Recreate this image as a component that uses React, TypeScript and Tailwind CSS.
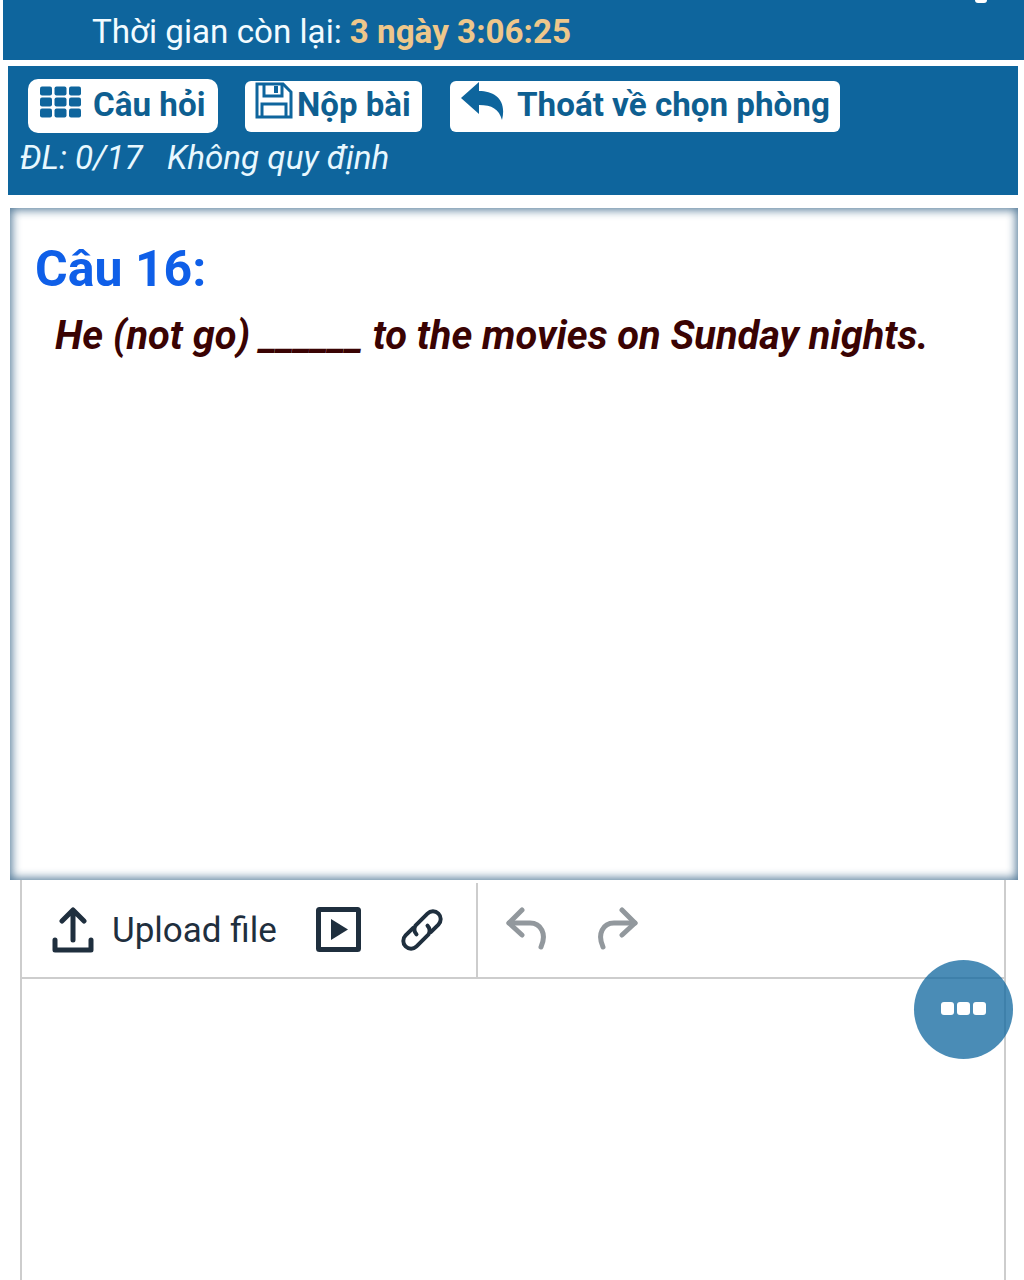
import React from "react";

const roboto = { fontFamily: "Roboto, sans-serif" };

function GridIcon() {
  const cells = [];
  for (let r = 0; r < 3; r++) for (let c = 0; c < 3; c++) cells.push(<rect key={`${r}-${c}`} x={c * 14.5} y={r * 11} width="12" height="9" rx="2" fill="#0e659d" />);
  return <svg width="41" height="32" viewBox="0 0 41 31" className="mb-[7px] shrink-0">{cells}</svg>;
}

function SaveIcon() {
  return (
    <svg width="38" height="38" viewBox="0 0 38 38" fill="none" stroke="#0e659d" strokeWidth="3" className="mb-3 shrink-0">
      <path d="M2 2H28L36 10V35H2Z" />
      <path d="M9 2V14H27V2" />
      <path d="M7 35V22H31V35" />
      <rect x="19" y="4" width="4" height="7" fill="#0e659d" stroke="none" />
    </svg>
  );
}

function ReplyIcon() {
  return (
    <svg width="44" height="38" viewBox="0 0 44 38" className="mb-3 shrink-0">
      <path d="M18 0V9C34 9 46 18 41 38C38 27 31 23 18 23V32L0 16Z" fill="#0e659d" />
    </svg>
  );
}

export default function App() {
  return (
    <div className="relative h-[1280px] w-full overflow-hidden bg-white" style={roboto}>
      <header className="ml-[3px] flex h-[60px] items-end bg-[#0e659d] pb-2 pl-[89px] text-[33.2px] leading-[40px] text-[#f2fbff]">
        <span>Thời gian còn lại: </span>
        <span className="ml-2 font-bold text-[#eec78b]">3 ngày 3:06:25</span>
      </header>

      <section className="ml-[8px] mr-[6px] mt-[6px] h-[129px] bg-[#0e659d] pl-3 pt-[13px]">
        <div className="flex items-start text-[#0e5f91]">
          <button className="ml-2 flex h-[54px] w-[190px] items-center rounded-[10px] bg-white pb-0.5 pl-3 text-[33.2px] font-bold">
            <GridIcon />
            <span className="ml-3">Câu hỏi</span>
          </button>
          <button className="ml-[27px] mt-0.5 flex h-[51px] w-[177px] items-center rounded-md bg-white pl-2.5 text-[33px] font-bold">
            <SaveIcon />
            <span className="ml-1 pb-1">Nộp bài</span>
          </button>
          <button className="ml-7 mt-0.5 flex h-[51px] w-[390px] items-center rounded-md bg-white pl-[11px] text-[33.2px] font-bold">
            <ReplyIcon />
            <span className="ml-[12px] pb-1">Thoát về chọn phòng</span>
          </button>
        </div>
        <p className="mt-[5px] text-[33.2px] italic leading-[40px] text-[#e8f8ff]">ĐL: 0/17 &nbsp; Không quy định</p>
      </section>

      <main className="ml-[10px] mr-[6px] mt-[13px] h-[672px] bg-white pl-[25px] pt-[33px] shadow-[inset_0_0_10px_2px_rgba(30,80,120,0.75)]">
        <h2 className="text-[50px] font-bold leading-[56px] text-[#0f5fe8]">Câu 16:</h2>
        <p className="ml-5 mt-4 text-[39.8px] font-bold italic leading-[46px] text-[#3a0303]">
          He (not go) ______ to the movies on Sunday nights.
        </p>
      </main>

      <section className="ml-[20px] mr-[18px] h-[400px] border-x-2 border-[#cdcdcd]">
        <div className="flex h-[99px] border-b-2 border-[#cdcdcd]">
          <div className="mt-[3px] flex w-[456px] items-center border-r-2 border-[#cdcdcd] pl-[30px] text-[#1f2f3e]">
            <svg width="42" height="46" viewBox="0 0 42 46" fill="none" stroke="#1f2f3e" strokeWidth="5" strokeLinecap="round" strokeLinejoin="round" className="shrink-0">
              <path d="M21 33V4M10 14L21 3L32 14" />
              <path d="M3 33V43H39V33" />
            </svg>
            <span className="ml-[18px] text-[35px] leading-none">Upload file</span>
            <svg width="46" height="46" viewBox="0 0 46 46" className="ml-[39px] shrink-0">
              <rect x="2.5" y="2.5" width="40" height="40" rx="1" fill="none" stroke="#1f2f3e" strokeWidth="5" />
              <path d="M15 12L32 22.5L15 33Z" fill="#1f2f3e" />
            </svg>
            <svg width="46" height="46" viewBox="1 1 42 42" fill="none" stroke="#1f2f3e" strokeWidth="3.6" strokeLinecap="round" strokeLinejoin="round" className="ml-[37px] shrink-0">
              <path d="M30 24L37 17A7 7 0 0 0 27 7L16 18A7 7 0 0 0 17 26" />
              <path d="M14 20L7 27A7 7 0 0 0 17 37L28 26A7 7 0 0 0 27 18" />
            </svg>
          </div>
          <div className="mt-[3px] flex items-center pb-0.5 pl-7">
            <svg width="42" height="44" viewBox="0 0 42 44" fill="none" stroke="#92989d" strokeWidth="5" strokeLinecap="round" strokeLinejoin="round" className="shrink-0">
              <path d="M16 3L3 16L16 28" />
              <path d="M3 16H24C35 16 41 27 35 40" />
            </svg>
            <svg width="42" height="44" viewBox="0 0 42 44" fill="none" stroke="#92989d" strokeWidth="5" strokeLinecap="round" strokeLinejoin="round" className="ml-12 shrink-0">
              <path d="M26 3L39 16L26 28" />
              <path d="M39 16H18C7 16 1 27 7 40" />
            </svg>
          </div>
        </div>
      </section>

      <button className="absolute left-[914px] top-[960px] flex h-[99px] w-[99px] items-center justify-center gap-[3px] rounded-full bg-[#0e659d]/75 pb-0.5">
        <span className="h-[13px] w-[13px] rounded-[3px] bg-white" />
        <span className="h-[13px] w-[13px] rounded-[3px] bg-white" />
        <span className="h-[13px] w-[13px] rounded-[3px] bg-white" />
      </button>

      <div className="absolute left-[975px] top-0 h-[3px] w-3 rounded-b-sm bg-white" />
    </div>
  );
}
